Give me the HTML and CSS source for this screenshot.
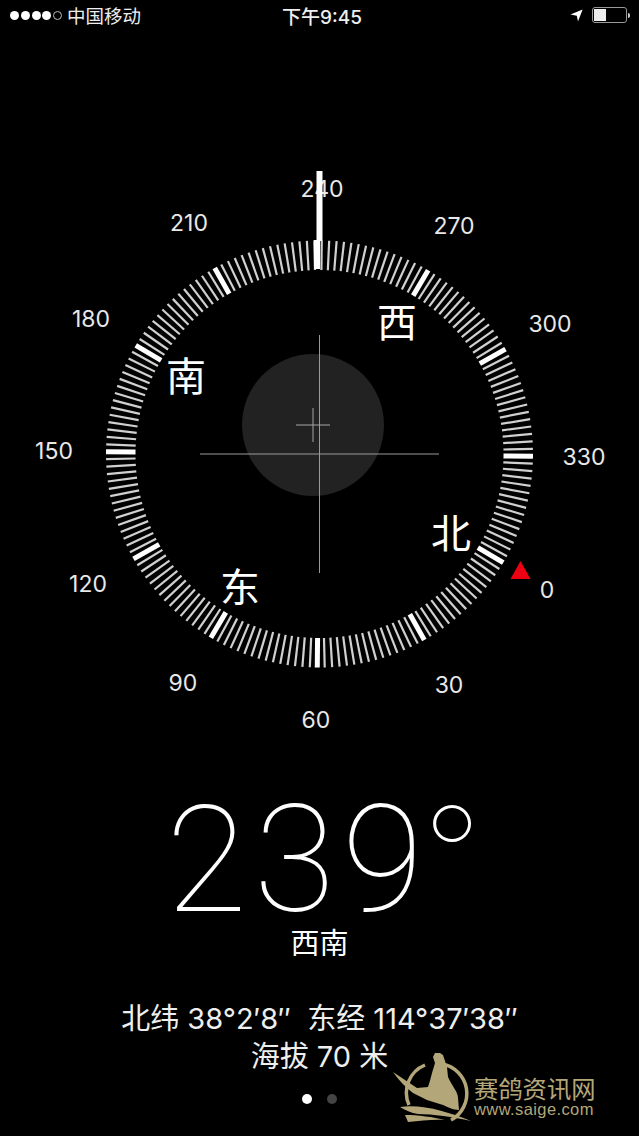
FILE: index.html
```html
<!DOCTYPE html>
<html lang="zh-Hans">
<head>
  <meta charset="UTF-8" />
  <title>指南针</title>
  <link rel="stylesheet" href="styles.css">
</head>
<body>
  <div class="phone">
    <div class="status">
      <div class="status-side status-left">
        <span class="signal"><i></i><i></i><i></i><i></i><i class="off"></i></span>
        <span>中国移动</span>
      </div>
      <div class="status-time">下午9:45</div>
      <div class="status-side status-right">
        <svg class="arrow" width="13" height="13" viewBox="0 0 13 13"><path d="M0.5 5.6 L12.6 0.6 L8 12.6 L6.8 6.8 Z" fill="#fff"/></svg>
        <span class="battery"><span class="battery-level"></span></span>
        <span class="battery-tip"></span>
      </div>
    </div>

    <svg class="compass" id="compass" width="639" height="680" viewBox="0 0 639 680">
      <circle class="dial-disc" cx="313" cy="365" r="71"/>
      <g id="ticks"></g>
      <line class="hair" x1="319.5" y1="275" x2="319.5" y2="513"/>
      <line class="hair" x1="200" y1="394" x2="439" y2="394"/>
      <line class="hair-small" x1="313" y1="348" x2="313" y2="382"/>
      <line class="hair-small" x1="296" y1="365" x2="330" y2="365"/>
      <g id="labels"></g>
      <rect class="needle" x="316.5" y="111" width="6" height="70"/>
      <rect class="needle" x="314" y="180" width="6" height="29"/>
      <polygon class="north-mark" points="520.5,501 530.5,519 510.5,519"/>
    </svg>

    <div class="reading">
      <div class="degrees"><span class="digits">23<span class="digit-last">9</span></span><span class="deg-sign">°</span></div>
      <div class="direction">西南</div>
      <div class="coords coords-first">北纬 38°2′8″&nbsp; 东经 114°37′38″</div>
      <div class="coords">海拔 70 米</div>
    </div>

    <div class="dots"><i></i><i class="off"></i></div>

    <div class="watermark">
      <svg width="80" height="74" viewBox="0 0 80 74">
        <path class="wm-ring" d="M49 14 A30 30 0 0 1 58 70"/>
        <path class="wm-ring" d="M32 15 A30 30 0 0 0 16 55"/>
        <path class="wm-shape" d="M42 3 L47 3 L50 5 L54 17 L55 27 C59 36 65 42 65 48 L66 60 C60 60 55 57 50 55 L34 50 L20 43 C12 37 5 29 0 22 L12 30 L24 38 L35 37 C37 31 38 27 39 23 L42 13 L40 7 Z"/>
        <path class="wm-shape" d="M7 57 C30 54 55 62 78 71 C60 67 40 64 25 64 C18 63 12 60 7 57 Z"/>
        <path class="wm-shape" d="M12 65 C25 65 40 67 52 70 C40 69 28 71 15 72 Z"/>
      </svg>
      <div class="watermark-text">
        <div class="wm-name">赛鸽资讯网</div>
        <div class="wm-url">www.saige.com</div>
      </div>
    </div>
  </div>
  <script src="script.js"></script>
</body>
</html>
```

FILE: styles.css
```css
* { box-sizing: border-box; }
body {
  margin: 0;
  background: #000;
  overflow: hidden;
  font-family: Inter, "Noto Sans CJK SC", sans-serif;
  color: #fff;
}
.phone {
  position: relative;
  width: 639px;
  height: 1136px;
  background: #000;
  overflow: hidden;
}

/* status bar */
.status {
  display: flex;
  justify-content: space-between;
  align-items: center;
  height: 30px;
  padding: 0 9px 0 10px;
  font-size: 18.5px;
  color: #eee;
}
.status-side {
  display: flex;
  align-items: center;
  gap: 5px;
  width: 200px;
}
.status-left { width: 204px; }
.status-right {
  justify-content: flex-end;
  gap: 0;
}
.status-time { font-size: 19px; font-weight: 500; }
.signal { display: flex; gap: 1.75px; }
.signal i {
  width: 9px; height: 9px;
  border-radius: 50%;
  background: #fff;
}
.signal i.off {
  background: none;
  border: 1px solid #bbb;
}
.arrow { margin-right: 9px; }
.battery {
  display: block;
  width: 35px; height: 16px;
  border: 1px solid #999;
  border-radius: 3px;
  padding: 1px;
}
.battery-level {
  display: block;
  width: 12px; height: 100%;
  background: #eee;
}
.battery-tip {
  width: 2px; height: 5px;
  margin-left: 1px;
  background: #ccc;
  border-radius: 0 2px 2px 0;
}

/* compass */
.compass { display: block; margin-top: 30px; }
.dial-disc { fill: #222; }
.tick { stroke: #d0d0d0; stroke-width: 2.2; }
.tick.major { stroke: #fff; stroke-width: 5; }
.hair { stroke: #9a9a9a; stroke-width: 1; }
.hair-small { stroke: #a5a5a5; stroke-width: 1; }
.needle { fill: #fff; }
.north-mark { fill: #ec0012; }
.num { font-size: 23px; fill: #e8e8e8; text-anchor: middle; dominant-baseline: central; }
.cardinal { font-size: 40px; fill: #fff; text-anchor: middle; dominant-baseline: central; }

/* reading below the dial */
.reading {
  display: flex;
  flex-direction: column;
  align-items: center;
}
.degrees {
  display: flex;
  margin-top: 55px;
  margin-bottom: 1px;
  padding-left: 8px;
  font-family: Roboto, sans-serif;
  font-weight: 100;
  font-size: 148px;
  line-height: 132px;
  height: 132px;
}
.digits { letter-spacing: 7px; }
.digit-last { letter-spacing: 0; }
.deg-sign {
  font-family: Inter, sans-serif;
  font-size: 128px;
  line-height: 116px;
}
.direction {
  font-size: 29px;
  line-height: 32px;
}
.coords {
  font-size: 29px;
  line-height: 38px;
  color: #eee;
}
.coords-first { margin-top: 40px; }

.dots {
  position: absolute;
  left: 302px; top: 1094px;
  display: flex;
  gap: 15px;
}
.dots i {
  width: 10px; height: 10px;
  border-radius: 50%;
  background: #fff;
}
.dots i.off { background: #444; }

/* site watermark */
.watermark {
  position: absolute;
  left: 393px; top: 1050px;
  display: flex;
  gap: 1px;
  color: #b3a77a;
}
.wm-ring { fill: none; stroke: #b3a77a; stroke-width: 3.5; }
.wm-shape { fill: #b3a77a; }
.watermark-text { margin-top: 27px; }
.wm-name { font-size: 24.3px; line-height: 24px; }
.wm-url { font-family: "Liberation Sans", sans-serif; font-size: 16.5px; line-height: 16px; letter-spacing: 0.4px; }
```

FILE: script.js
```js
const NS = "http://www.w3.org/2000/svg";
const CX = 319.5, CY = 394;
const ROTATION = 0.6 - 240;
const ticks = document.getElementById("ticks");
const labels = document.getElementById("labels");

// label places, read off the dial (the photo is not quite round)
const NUMS = [
  ["0", 547, 530], ["30", 449, 625], ["60", 316, 660], ["90", 183, 623],
  ["120", 88, 524], ["150", 54, 391], ["180", 91, 259], ["210", 189, 163],
  ["240", 322, 129], ["270", 454, 166], ["300", 550, 264], ["330", 584, 397]
];
const CARDINALS = [["北", 451, 473], ["东", 240, 527], ["南", 186, 316], ["西", 397, 262]];

function add(parent, tag, cls, attrs, text) {
  const el = document.createElementNS(NS, tag);
  el.setAttribute("class", cls);
  for (const k in attrs) el.setAttribute(k, attrs[k]);
  if (text) el.textContent = text;
  parent.appendChild(el);
}

function point(deg, r) {
  const a = (deg + ROTATION - 90) * Math.PI / 180;
  return [CX + r * Math.cos(a), CY + r * Math.sin(a)];
}

for (let d = 0; d < 360; d += 2) {
  const [x1, y1] = point(d, 184);
  const [x2, y2] = point(d, 213.5);
  // 240 sits under the needle, so it stays thin
  const major = d % 30 === 0 && d !== 240;
  add(ticks, "line", major ? "tick major" : "tick", { x1, y1, x2, y2 });
}

NUMS.forEach(([t, x, y]) => add(labels, "text", "num", { x, y }, t));
CARDINALS.forEach(([t, x, y]) => add(labels, "text", "cardinal", { x, y }, t));
```
